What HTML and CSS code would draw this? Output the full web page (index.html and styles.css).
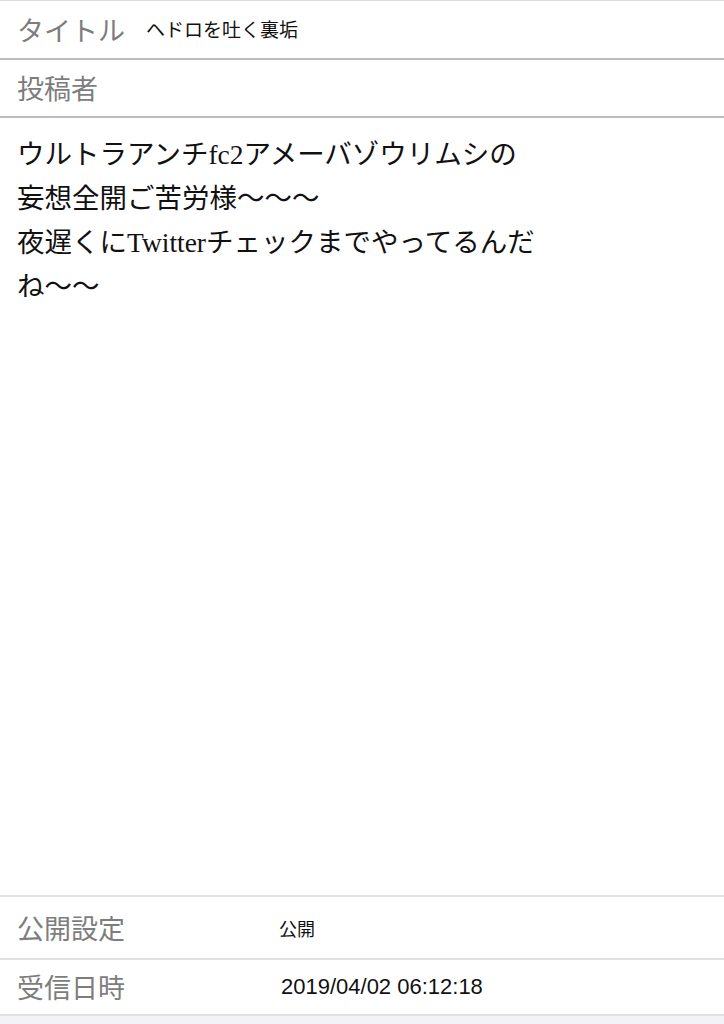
FILE: index.html
```html
<!DOCTYPE html>
<html lang="ja">
<head>
    <meta charset="UTF-8">
    <meta name="viewport" content="width=device-width, initial-scale=1.0">
    <title>メッセージ詳細</title>
    <link rel="stylesheet" href="styles.css">
</head>
<body>
    <div class="page">
        <div class="field field-title">
            <div class="label">タイトル</div>
            <div class="value">ヘドロを吐く裏垢</div>
        </div>
        <div class="field field-author">
            <div class="label">投稿者</div>
        </div>
        <div class="message">ウルトラアンチfc2アメーバゾウリムシの<br>妄想全開ご苦労様〜〜〜<br>夜遅くにTwitterチェックまでやってるんだ<br>ね〜〜</div>
        <div class="info">
            <div class="info-row info-public">
                <div class="info-label">公開設定</div>
                <div class="info-value small">公開</div>
            </div>
            <div class="info-row info-date">
                <div class="info-label">受信日時</div>
                <div class="info-value date">2019/04/02 06:12:18</div>
            </div>
        </div>
        <div class="footer"></div>
    </div>
</body>
</html>
```

FILE: styles.css
```css
body {
    margin: 0;
    background-color: #ffffff;
    font-family: "Noto Sans CJK JP", sans-serif;
}
.page {
    display: flex;
    flex-direction: column;
    height: 100vh;
}
.field {
    display: flex;
    align-items: center;
    padding: 0 17px;
    border-bottom: 2px solid #bcbcbc;
}
.field-title {
    height: 57px;
    border-top: 1px solid #dddddd;
}
.field-author {
    height: 56px;
}
.label {
    font-size: 27px;
    line-height: 30px;
    color: #7d7d7d;
}
.value {
    margin-left: 21px;
    margin-top: -3px;
    font-size: 19px;
    color: #111111;
}
.message {
    flex: 1;
    padding: 15px 17px 0;
    font-family: "Liberation Serif", "Noto Sans CJK JP", serif;
    font-size: 27.5px;
    line-height: 44px;
    color: #111111;
}
.info {
    border-top: 2px solid #e2e2e2;
}
.info-row {
    display: flex;
    align-items: center;
    padding: 0 17px;
    border-bottom: 2px solid #e2e2e2;
}
.info-public {
    height: 61px;
}
.info-date {
    height: 54px;
}
.info-label {
    width: 262px;
    font-size: 27px;
    line-height: 30px;
    color: #7d7d7d;
}
.info-value {
    color: #111111;
}
.info-value.small {
    font-size: 18px;
}
.info-value.date {
    margin-left: 2px;
    font-family: "Liberation Sans", sans-serif;
    font-size: 22px;
}
.footer {
    height: 8px;
    background-color: #f3f3f6;
}
```
